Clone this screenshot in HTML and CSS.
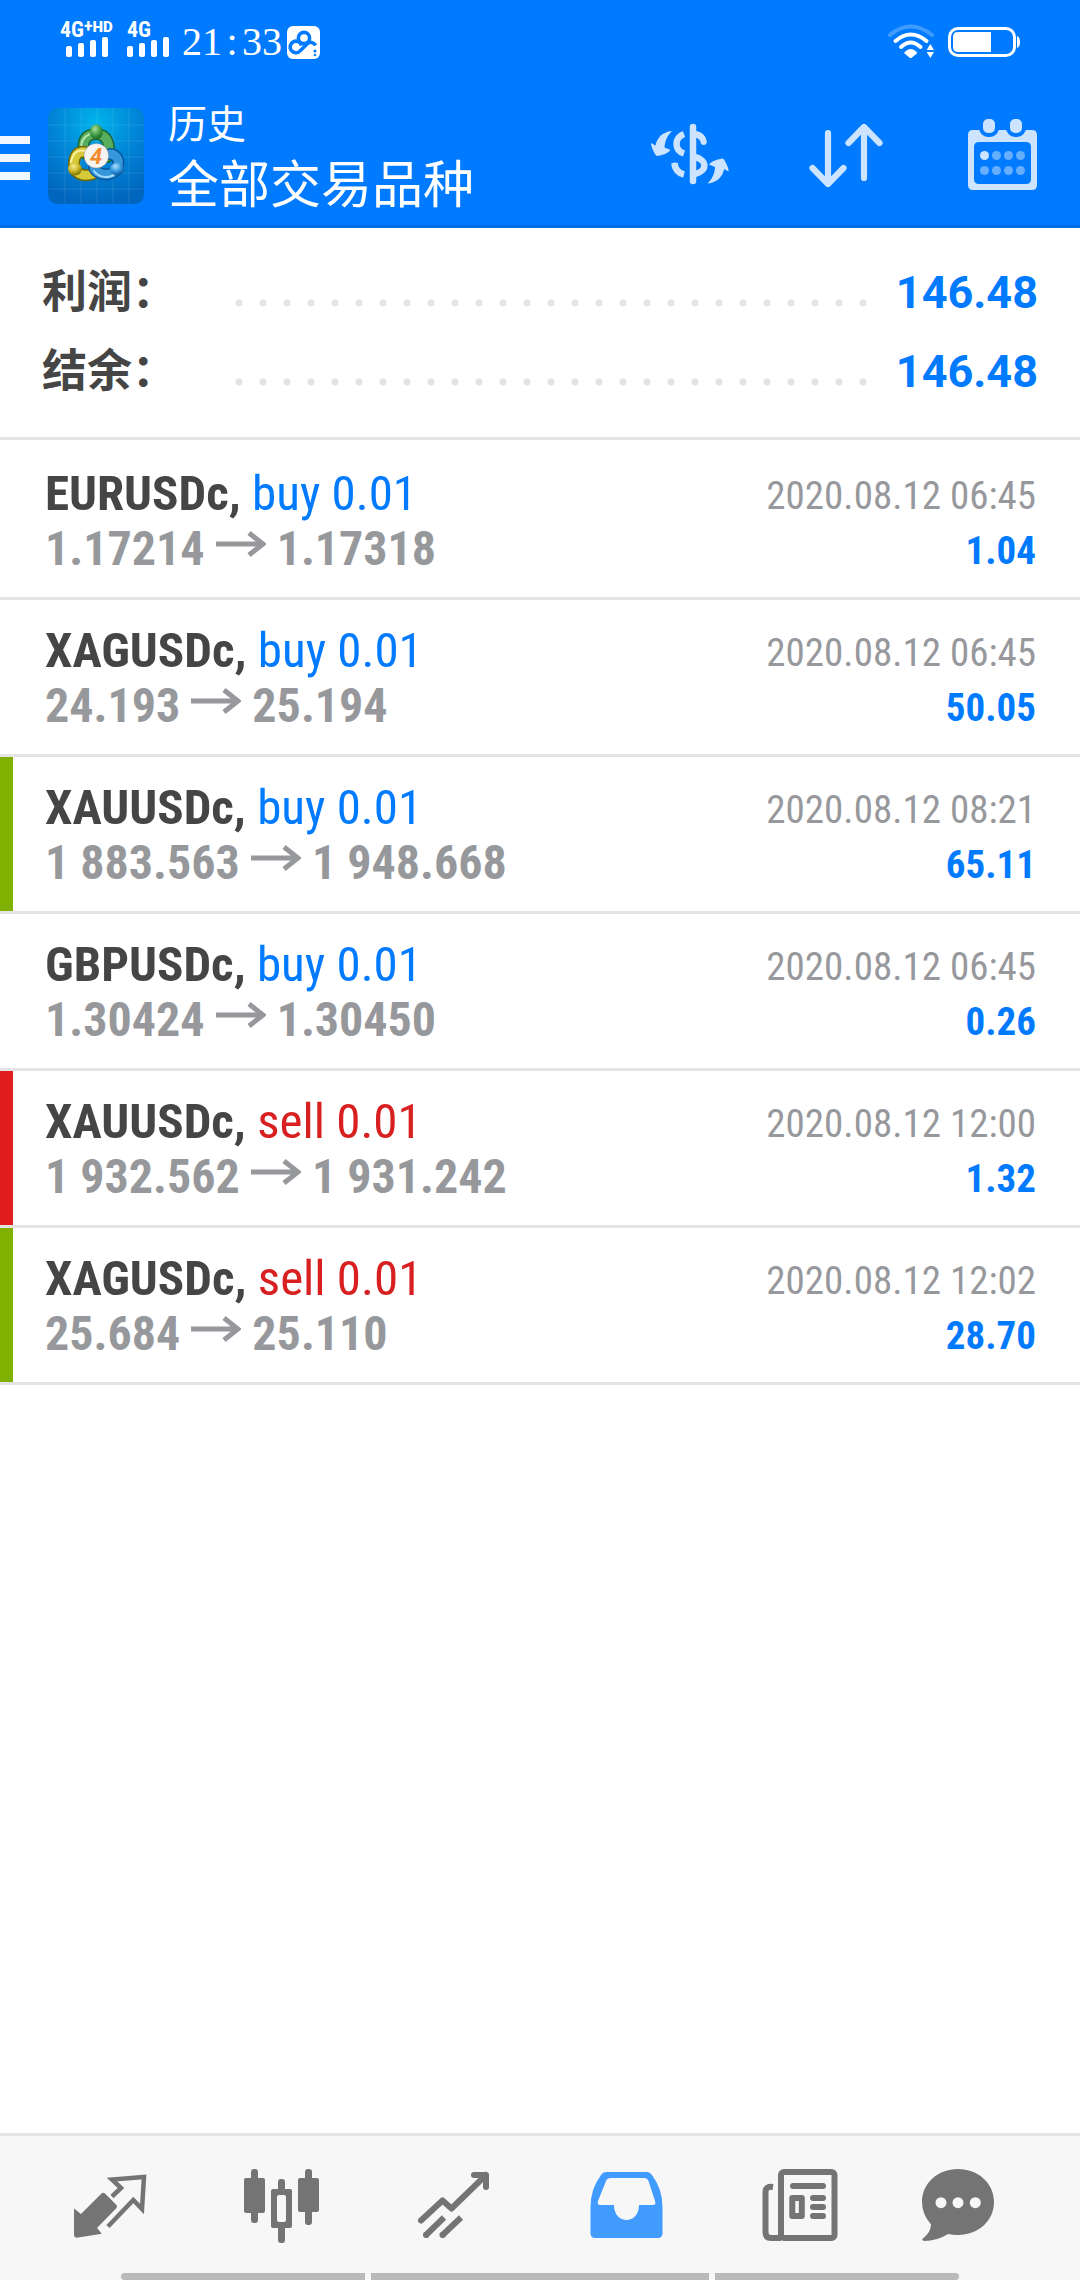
FILE: index.html
```html
<!DOCTYPE html>
<html lang="zh-CN">
<head>
<meta charset="utf-8">
<meta name="viewport" content="width=device-width, initial-scale=1">
<title>历史</title>
<link rel="stylesheet" href="styles.css">
</head>
<body>
<header class="header">
  <div class="status">
    <div class="signal">
      <div class="signal-label">4G<span class="signal-plus">+</span><span class="signal-hd">HD</span></div>
      <svg class="signal-bars" viewBox="0 0 42 20" width="42" height="20" aria-hidden="true"><g fill="#fff"><rect x="0" y="9" width="6" height="11" rx="2"/><rect x="12" y="6" width="6" height="14" rx="2"/><rect x="24" y="3" width="6" height="17" rx="2"/><rect x="36" y="0" width="6" height="20" rx="2"/></g></svg>
    </div>
    <div class="signal signal-second">
      <div class="signal-label">4G</div>
      <svg class="signal-bars" viewBox="0 0 42 20" width="42" height="20" aria-hidden="true"><g fill="#fff"><rect x="0" y="9" width="6" height="11" rx="2"/><rect x="12" y="6" width="6" height="14" rx="2"/><rect x="24" y="3" width="6" height="17" rx="2"/><rect x="36" y="0" width="6" height="20" rx="2"/></g></svg>
    </div>
    <div class="clock">21<span class="clock-colon">:</span>33</div>
    <svg class="app-badge" viewBox="0 0 33 33" width="33" height="33" aria-hidden="true"><rect width="33" height="33" rx="6" fill="#fff"/><g fill="none" stroke="#007aff" stroke-width="3.6"><circle cx="17" cy="12" r="5.6"/><path d="M14.500 19.500A5.800 5.800 0 1 0 13.500 24.500L20.500 17.500C23 15.500 27 16 28.500 19.500"/></g><circle cx="28" cy="25" r="1.500" fill="#007aff"/><circle cx="28" cy="29" r="1.300" fill="#007aff"/></svg>
    <div class="status-right">
      <svg viewBox="0 0 48 36" width="48" height="36" aria-hidden="true"><g fill="none" stroke="#fff" stroke-width="4" stroke-linecap="round"><path opacity=".25" d="M2 11Q22.700 -6 44 11"/><path d="M7.500 17Q22.700 4 38.500 17"/><path d="M13 23Q22.700 14 32.500 23"/></g><path d="M16 29Q22.700 21 29.400 29L24 33.500Q22.700 34.500 21.400 33.500Z" fill="#fff"/><path d="M38.700 26L42.300 20L46 26ZM38.700 28L42.300 34L46 28Z" fill="#fff"/></svg>
      <svg viewBox="0 0 72 30" width="72" height="30" aria-hidden="true"><rect x="1.500" y="1.500" width="65" height="27" rx="8.500" fill="none" stroke="#fff" stroke-width="3"/><path d="M10 5H43V25H10Q5 25 5 20V10Q5 5 10 5Z" fill="#fff"/><path d="M69 9Q72 10 72 15T69 21Z" fill="#fff"/></svg>
    </div>
  </div>
  <div class="toolbar">
    <button class="menu" type="button" aria-label="菜单"><span class="menu-bar"></span><span class="menu-bar"></span><span class="menu-bar"></span></button>
    <svg class="logo" viewBox="0 0 96 96" width="96" height="96" aria-hidden="true">
      <defs>
        <radialGradient id="bg" cx=".5" cy=".15" r=".85"><stop offset="0" stop-color="#00b4ea"/><stop offset=".5" stop-color="#0086d8"/><stop offset="1" stop-color="#0065bd"/></radialGradient>
        <radialGradient id="gh" cx=".4" cy=".3" r=".7"><stop offset="0" stop-color="#a8dc9c"/><stop offset=".6" stop-color="#3f9a42"/><stop offset="1" stop-color="#1d6a2a"/></radialGradient>
        <radialGradient id="yh" cx=".4" cy=".3" r=".7"><stop offset="0" stop-color="#f8f090"/><stop offset=".6" stop-color="#c4b01e"/><stop offset="1" stop-color="#7c7008"/></radialGradient>
        <radialGradient id="bh" cx=".4" cy=".3" r=".7"><stop offset="0" stop-color="#a6e0ff"/><stop offset=".6" stop-color="#2f92da"/><stop offset="1" stop-color="#0d559c"/></radialGradient>
      </defs>
      <rect width="96" height="96" rx="9" fill="url(#bg)"/>
      <path d="M17 0V96M33 0V96M49 0V96M65 0V96M81 0V96M0 17H96M0 33H96M0 49H96M0 65H96M0 81H96" stroke="#fff" stroke-opacity=".1"/>
      <g fill="none" stroke-linecap="round">
        <path d="M38 46C32 34 38 26 48 26S64 36 59 49" stroke="#1b6530" stroke-width="12"/>
        <path d="M38 46C32 34 38 26 48 26S64 36 59 49" stroke="#57ae5c" stroke-width="9"/>
        <path d="M34 43C31 33 38 25 48 25" stroke="#b8e5ae" stroke-width="2"/>
        <path d="M45 66C35 69 25 66 26 55S33 42 41 45" stroke="#6f6808" stroke-width="12"/>
        <path d="M45 66C35 69 25 66 26 55S33 42 41 45" stroke="#d6ca38" stroke-width="9"/>
        <path d="M23 54C25 44 31 41 38 43" stroke="#faf3a2" stroke-width="2"/>
        <path d="M46 60C50 68 65 69 69 60S67 46 62 46" stroke="#0b559a" stroke-width="12"/>
        <path d="M46 60C50 68 65 69 69 60S67 46 62 46" stroke="#3697db" stroke-width="9"/>
        <path d="M46 63C51 70 62 71 68 65" stroke="#a4dcff" stroke-width="2"/>
      </g>
      <ellipse cx="48.300" cy="24" rx="6.500" ry="7.500" fill="url(#gh)"/>
      <ellipse cx="27" cy="61" rx="7" ry="6.500" fill="url(#yh)"/>
      <ellipse cx="69" cy="61" rx="7" ry="6.500" fill="url(#bh)"/>
      <circle cx="48.300" cy="47.700" r="12.300" fill="#f5f4f2" stroke="#777" stroke-opacity=".4"/>
      <text class="logo-digit" x="48" y="56" text-anchor="middle">4</text>
    </svg>
    <div class="titles">
      <h1 class="title">历史</h1>
      <div class="subtitle">全部交易品种</div>
    </div>
    <div class="actions">
      <button class="action" type="button" aria-label="货币"><svg viewBox="0 0 96 96" width="96" height="96"><g fill="none" stroke="#cce4ff" stroke-width="6.500"><path stroke-linecap="round" d="M51 19V73"/><path d="M42 26C32 30 32 42 42 45.500"/><path d="M32.500 55C33 61 36 65 42 66.500"/><path d="M53 26C58 27 61 29 61.500 33.500" /><path d="M53 49C65.500 52 65.500 63 53 66"/></g><circle cx="61.700" cy="34" r="3" fill="#cce4ff"/><circle cx="32.600" cy="57.500" r="3" fill="#cce4ff"/><path id="swap" fill="#cce4ff" d="M9 35L13.500 37.500C15 30 20 24 30 23C25 28 23 33 22.500 39.500L28.700 42C25 46 20 47 15.500 48Q14 48 13 46C11 42 9 39 9 35Z"/><use href="#swap" transform="rotate(180 47.800 49.300)"/></svg></button>
      <button class="action" type="button" aria-label="排序"><svg viewBox="0 0 96 96" width="96" height="96"><path fill="none" stroke="#cce4ff" stroke-width="6.200" stroke-linecap="round" stroke-linejoin="round" d="M30 25V75M14.500 60L30 76L45.500 60M66 70V20M50.500 35L66 19L81.500 35"/></svg></button>
      <button class="action" type="button" aria-label="日期"><svg viewBox="0 0 96 96" width="96" height="96"><path fill="#cce4ff" fill-rule="evenodd" d="M19 22H78Q83 22 83 27V77Q83 82 78 82H19Q14 82 14 77V27Q14 22 19 22ZM25 34Q20 34 20 39V71Q20 76 25 76H72Q77 76 77 71V39Q77 34 72 34Z"/><g fill="#cce4ff" stroke="#007aff" stroke-width="4"><rect x="27" y="9" width="16" height="18" rx="7"/><rect x="54" y="9" width="16" height="18" rx="7"/></g><circle cx="30.500" cy="47.500" r="4.500" fill="#cce4ff"/><g fill="#66afff"><circle cx="42.500" cy="47.500" r="4.500"/><circle cx="54.500" cy="47.500" r="4.500"/><circle cx="66.500" cy="47.500" r="4.500"/><circle cx="30.500" cy="62.500" r="4.500"/><circle cx="42.500" cy="62.500" r="4.500"/><circle cx="54.500" cy="62.500" r="4.500"/><circle cx="66.500" cy="62.500" r="4.500"/></g></svg></button>
    </div>
  </div>
</header>
<main class="content">
  <dl class="summary">
    <div class="summary-row"><dt class="summary-label">利润：</dt><dd class="summary-value">146.48</dd></div>
    <div class="summary-row"><dt class="summary-label">结余：</dt><dd class="summary-value">146.48</dd></div>
  </dl>
  <ul class="deals">
    <li class="deal">
      <div class="deal-main"><div class="deal-title">EURUSDc, <span class="buy">buy 0.01</span></div><div class="deal-prices">1.17214 <svg class="arrow" viewBox="0 0 50 26" width="50" height="26" role="img" aria-label="至"><path d="M0 13H47M33 2L47 13L33 24" fill="none" stroke="#97989c" stroke-width="5"/></svg> 1.17318</div></div>
      <div class="deal-side"><time class="deal-time">2020.08.12 06:45</time><div class="deal-profit">1.04</div></div>
    </li>
    <li class="deal">
      <div class="deal-main"><div class="deal-title">XAGUSDc, <span class="buy">buy 0.01</span></div><div class="deal-prices">24.193 <svg class="arrow" viewBox="0 0 50 26" width="50" height="26" role="img" aria-label="至"><path d="M0 13H47M33 2L47 13L33 24" fill="none" stroke="#97989c" stroke-width="5"/></svg> 25.194</div></div>
      <div class="deal-side"><time class="deal-time">2020.08.12 06:45</time><div class="deal-profit">50.05</div></div>
    </li>
    <li class="deal deal-tp">
      <div class="deal-main"><div class="deal-title">XAUUSDc, <span class="buy">buy 0.01</span></div><div class="deal-prices">1 883.563 <svg class="arrow" viewBox="0 0 50 26" width="50" height="26" role="img" aria-label="至"><path d="M0 13H47M33 2L47 13L33 24" fill="none" stroke="#97989c" stroke-width="5"/></svg> 1 948.668</div></div>
      <div class="deal-side"><time class="deal-time">2020.08.12 08:21</time><div class="deal-profit">65.11</div></div>
    </li>
    <li class="deal">
      <div class="deal-main"><div class="deal-title">GBPUSDc, <span class="buy">buy 0.01</span></div><div class="deal-prices">1.30424 <svg class="arrow" viewBox="0 0 50 26" width="50" height="26" role="img" aria-label="至"><path d="M0 13H47M33 2L47 13L33 24" fill="none" stroke="#97989c" stroke-width="5"/></svg> 1.30450</div></div>
      <div class="deal-side"><time class="deal-time">2020.08.12 06:45</time><div class="deal-profit">0.26</div></div>
    </li>
    <li class="deal deal-sl">
      <div class="deal-main"><div class="deal-title">XAUUSDc, <span class="sell">sell 0.01</span></div><div class="deal-prices">1 932.562 <svg class="arrow" viewBox="0 0 50 26" width="50" height="26" role="img" aria-label="至"><path d="M0 13H47M33 2L47 13L33 24" fill="none" stroke="#97989c" stroke-width="5"/></svg> 1 931.242</div></div>
      <div class="deal-side"><time class="deal-time">2020.08.12 12:00</time><div class="deal-profit">1.32</div></div>
    </li>
    <li class="deal deal-tp">
      <div class="deal-main"><div class="deal-title">XAGUSDc, <span class="sell">sell 0.01</span></div><div class="deal-prices">25.684 <svg class="arrow" viewBox="0 0 50 26" width="50" height="26" role="img" aria-label="至"><path d="M0 13H47M33 2L47 13L33 24" fill="none" stroke="#97989c" stroke-width="5"/></svg> 25.110</div></div>
      <div class="deal-side"><time class="deal-time">2020.08.12 12:02</time><div class="deal-profit">28.70</div></div>
    </li>
  </ul>
</main>
<footer class="footer">
  <nav class="tabs">
    <button class="tab" type="button" aria-label="行情"><svg viewBox="0 0 96 96" width="96" height="96"><path fill="#747474" d="M12 50.500L19 56L39.500 35.500Q41.300 34 43 35.500L54.500 47Q55.500 48.700 54.500 50L35 70L39.800 75.800L14.500 79.800Q12 79.500 12 77Z"/><path fill="none" stroke="#747474" stroke-width="4.500" d="M50 38.500L59 30L50 21.500L82 19L80 51L71.300 42L46 68.500"/></svg></button>
    <button class="tab" type="button" aria-label="图表"><svg viewBox="0 0 96 96" width="96" height="96"><g fill="#747474"><rect x="10" y="20" width="21" height="35" rx="2"/><rect x="17" y="11" width="7" height="54" rx="3"/><rect x="64" y="20" width="21" height="34" rx="2"/><rect x="71" y="11" width="7" height="56" rx="3"/><rect x="44" y="21" width="7" height="20" rx="3"/><rect x="44" y="60" width="7" height="25" rx="3"/><rect x="37" y="31" width="21" height="39" rx="2"/></g><rect x="43" y="37" width="9" height="27" rx="2" fill="#f7f7f7"/></svg></button>
    <button class="tab" type="button" aria-label="交易"><svg viewBox="0 0 96 96" width="96" height="96"><path fill="none" stroke="#747474" stroke-width="6" stroke-linecap="round" stroke-linejoin="round" d="M15 62.500L36.500 42.500L45.500 50.500L80 17M68 17H80V29"/><path fill="none" stroke="#747474" stroke-width="6" d="M19 78L38 59.500M35.500 78L55 59.500"/><circle cx="20" cy="77" r="3" fill="#747474"/><circle cx="36.500" cy="77" r="3" fill="#747474"/></svg></button>
    <button class="tab" type="button" aria-label="历史" aria-current="page"><svg viewBox="0 0 96 96" width="96" height="96"><path fill="#429bff" fill-rule="evenodd" d="M28 14H69Q72 14 74 17Q84.500 31 84.500 49V75Q84.500 80 80 80H17Q12.500 80 12.500 75V49Q12.500 31 23 17Q25 14 28 14ZM33 20Q29 20 28 23L20 43Q19 47 22 47H36C36 67 61 67 61 47H75Q78.500 47 77 43L70.500 23Q69.500 20 66 20Z"/></svg></button>
    <button class="tab" type="button" aria-label="新闻"><svg viewBox="0 0 96 96" width="96" height="96"><g fill="none" stroke="#747474" stroke-width="6"><rect x="31" y="14" width="53.500" height="66" rx="3"/><path d="M23 29Q15.500 28 15.500 34V74Q15.500 80 21 80H31"/><path stroke-linecap="round" d="M43 28H73M63 40H73M63 49H73M63 58H73"/></g><rect x="42.300" y="40" width="9.500" height="18" fill="none" stroke="#747474" stroke-width="6" stroke-linejoin="round"/></svg></button>
    <button class="tab" type="button" aria-label="消息"><svg viewBox="0 0 96 96" width="96" height="96"><path fill="#747474" d="M36 11C56 11 72 25 72 44S56 77 36 77Q31 77 26 76Q15 83 2 83Q-1 82 1 80.500Q9 74 9 66.500Q0 56 0 44C0 25 16 11 36 11Z"/><g fill="#f7f7f7"><circle cx="19" cy="44.700" r="5.500"/><circle cx="36" cy="44.700" r="5.500"/><circle cx="53.300" cy="44.700" r="5.500"/></g></svg></button>
  </nav>
  <div class="gesture"><span class="gesture-bar gesture-left"></span><span class="gesture-bar gesture-mid"></span><span class="gesture-bar gesture-right"></span></div>
</footer>
</body>
</html>
```
FILE: styles.css
```css
* { box-sizing: border-box; }

body {
  margin: 0;
  min-height: 100vh;
  display: flex;
  flex-direction: column;
  background: #fff;
  color: #454545;
  font-family: "Roboto Condensed", "Liberation Sans Narrow", Roboto, "Noto Sans CJK SC", sans-serif;
}

h1, dl, dd, ul { margin: 0; padding: 0; }
svg { display: block; }

button {
  padding: 0;
  border: 0;
  background: none;
}

/* Header */
.header {
  background: #007aff;
  color: #fff;
  box-shadow: inset 0 -3px #006fe6;
}

.status {
  height: 84px;
  display: flex;
  align-items: flex-start;
  padding: 20px 60px 0;
}

.signal {
  width: 67px;
  padding-top: 1px;
}

.signal-second { width: 55px; }

.signal-label {
  height: 16px;
  display: flex;
  font: bold 22px/18px "Roboto Condensed", "Liberation Sans Narrow", sans-serif;
}

.signal-plus { font-size: 18px; line-height: 10px; }
.signal-hd { font: 900 15px/12px Roboto, sans-serif; }
.signal-bars { margin-left: 6px; }
.signal-second .signal-bars { margin-left: 0; }

.clock {
  display: flex;
  font: 40px/44px "Liberation Serif", serif;
}

.clock-colon {
  width: 20px;
  text-align: center;
}

.app-badge { margin: 6px 0 0 5px; }

.status-right {
  margin-left: auto;
  padding-top: 4px;
  display: flex;
  align-items: center;
  gap: 12px;
}

.toolbar {
  height: 144px;
  display: flex;
  align-items: center;
}

.menu {
  width: 30px;
  padding-top: 4px;
  display: flex;
  flex-direction: column;
  gap: 10px;
}

.menu-bar {
  height: 8px;
  background: #f0f7ff;
}

.logo { margin: 0 24px 0 18px; }

.logo-digit {
  font: italic bold 22px Roboto, sans-serif;
  fill: #f28a2e;
}

.titles {
  flex: 1;
  padding-bottom: 5px;
  font-family: "Noto Sans CJK SC", sans-serif;
}

.title {
  font-size: 39px;
  line-height: 54px;
  font-weight: 400;
}

.subtitle {
  font-size: 51px;
  line-height: 66px;
}

.actions { display: flex; }

.action {
  width: 156px;
  display: flex;
  justify-content: center;
}

/* Totals */
.content { flex: 1; }

.summary {
  padding: 24px 42px 27px;
  border-bottom: 3px solid #e4e4e4;
}

.summary-row {
  height: 79px;
  display: flex;
  align-items: center;
}

/* Dotted leader between label and value */
.summary-row::before {
  content: "";
  order: 1;
  flex: 1;
  height: 8px;
  margin: 22px 18px 0 50px;
  background: radial-gradient(circle at center, #e4e4e4 3px, transparent 4px) 0 0 / 24px 8px repeat-x;
}

.summary-label {
  width: 135px;
  padding-bottom: 5px;
  font: bold 45px/60px "Noto Sans CJK SC", sans-serif;
}

.summary-value {
  order: 2;
  padding-top: 3px;
  font: bold 45px/60px Roboto, sans-serif;
  color: #007aff;
}

/* Deals */
.deals {
  padding-top: 3px;
  list-style: none;
}

.deal {
  height: 157px;
  display: flex;
  justify-content: space-between;
  padding: 23px 44px 0 45px;
  border-bottom: 3px solid #e4e4e4;
}

.deal-tp { background: linear-gradient(to right, #80b000 13px, #fff 13px); }
.deal-sl { background: linear-gradient(to right, #e11e1e 13px, #fff 13px); }

.deal-title,
.deal-prices {
  line-height: 55px;
  font-weight: 700;
  white-space: pre;
}

.deal-title { font-size: 49px; }

.deal-prices {
  font-size: 48px;
  color: #97989c;
}

.arrow {
  display: inline-block;
  vertical-align: 8px;
}

.buy, .sell { font-weight: 400; }
.buy { color: #007aff; }
.sell { color: #d92020; }

.deal-side {
  padding-top: 3px;
  text-align: right;
  font-size: 39px;
  line-height: 55px;
}

.deal-time { color: #97989c; }

.deal-profit {
  color: #007aff;
  font-weight: 700;
}

/* Bottom tabs */
.footer {
  background: #f7f7f7;
  border-top: 3px solid #e4e4e4;
}

.tabs {
  display: grid;
  grid-template-columns: repeat(6, 1fr);
  padding: 22px 24px 19px;
}

.tab {
  display: flex;
  justify-content: center;
}

.gesture {
  display: flex;
  gap: 6px;
  padding: 0 121px;
}

.gesture-bar {
  height: 7px;
  flex: 244;
  background: #bababa;
}

.gesture-mid { flex: 338; }
.gesture-left { border-radius: 4px 0 0 4px; }
.gesture-right { border-radius: 0 4px 4px 0; }
```
